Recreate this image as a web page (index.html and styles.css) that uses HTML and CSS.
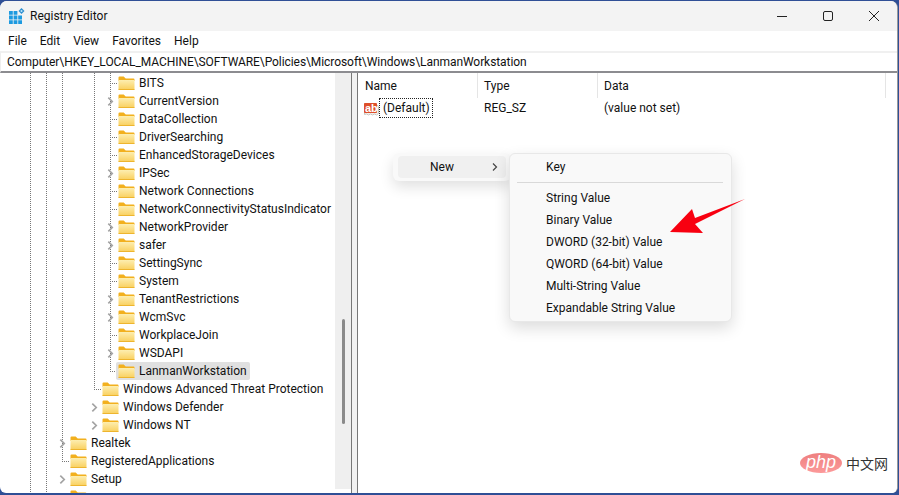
FILE: index.html
```html
<!DOCTYPE html>
<html lang="en">
<head>
<meta charset="utf-8">
<title>Registry Editor</title>
<link rel="stylesheet" href="styles.css">
</head>
<body>
<svg class="defs" width="0" height="0" aria-hidden="true">
  <defs>
    <linearGradient id="fb" x1="0" y1="0" x2="0" y2="1"><stop offset="0" stop-color="#fdeeb0"/><stop offset="1" stop-color="#f9cf5c"/></linearGradient>
    <symbol id="folder" viewBox="0 0 17 16">
      <path d="M0.5 2.5a1 1 0 0 1 1-1h4.2l2 2H15.5a1 1 0 0 1 1 1V6H0.5z" fill="#f2b01e"/>
      <path d="M0.5 5h16v9a1 1 0 0 1-1 1h-14a1 1 0 0 1-1-1z" fill="url(#fb)"/>
      <path d="M0.5 14.5h16" stroke="#eeb52e" stroke-width="1"/>
    </symbol>
    <symbol id="chev" viewBox="0 0 8 12"><path d="M1.5 1.5L6 6l-4.500 4.500" fill="none" stroke="#a3a3a3" stroke-width="1.900"/></symbol>
  </defs>
</svg>
<div class="window">
  <header class="titlebar">
    <svg class="appicon" width="16" height="16" viewBox="0 0 16 16">
      <path d="M0 3h3.800v3.800H0zM4.600 3h3.800v3.800H4.600zM0 7.600h3.800v3.800H0zM4.600 7.600h3.800v3.800H4.600zM9.200 7.600H13v3.800H9.200zM0 12.200h3.800V16H0zM4.600 12.200h3.800V16H4.600zM9.200 12.200H13V16H9.200z" fill="#1d9ae0"/>
      <path d="M12.500 0l3 3-3 3-3-3z" fill="#2f8fd0"/><circle cx="12.500" cy="3" r="1" fill="#bfe6fb"/>
    </svg>
    <span class="apptitle">Registry Editor</span>
    <div class="controls">
      <svg class="ctl" width="46" height="22" viewBox="0 0 46 22"><path d="M18 11.500h10" stroke="#222" stroke-width="1"/></svg>
      <svg class="ctl" width="46" height="22" viewBox="0 0 46 22"><rect x="18.500" y="6.500" width="9" height="9" rx="1.500" fill="none" stroke="#222" stroke-width="1"/></svg>
      <svg class="ctl" width="46" height="22" viewBox="0 0 46 22"><path d="M18 6l10 10M28 6L18 16" stroke="#222" stroke-width="1"/></svg>
    </div>
  </header>
  <nav class="menubar">
    <span class="menuitem">File</span><span class="menuitem">Edit</span><span class="menuitem">View</span><span class="menuitem">Favorites</span><span class="menuitem">Help</span>
  </nav>
  <div class="address">Computer\HKEY_LOCAL_MACHINE\SOFTWARE\Policies\Microsoft\Windows\LanmanWorkstation</div>
  <main class="panes">
    <section class="tree">
      <i class="guide g30"></i><i class="guide g46"></i><i class="guide g62"></i><i class="guide g94"></i><i class="guide g110"></i>
      <i class="thumb"></i>
      <div class="row a leaf"><span class="twisty"></span><svg class="fld"><use href="#folder"/></svg><span class="label">BITS</span></div>
      <div class="row a"><span class="twisty"><svg class="chv"><use href="#chev"/></svg></span><svg class="fld"><use href="#folder"/></svg><span class="label">CurrentVersion</span></div>
      <div class="row a leaf"><span class="twisty"></span><svg class="fld"><use href="#folder"/></svg><span class="label">DataCollection</span></div>
      <div class="row a leaf"><span class="twisty"></span><svg class="fld"><use href="#folder"/></svg><span class="label">DriverSearching</span></div>
      <div class="row a leaf"><span class="twisty"></span><svg class="fld"><use href="#folder"/></svg><span class="label">EnhancedStorageDevices</span></div>
      <div class="row a"><span class="twisty"><svg class="chv"><use href="#chev"/></svg></span><svg class="fld"><use href="#folder"/></svg><span class="label">IPSec</span></div>
      <div class="row a leaf"><span class="twisty"></span><svg class="fld"><use href="#folder"/></svg><span class="label">Network Connections</span></div>
      <div class="row a leaf"><span class="twisty"></span><svg class="fld"><use href="#folder"/></svg><span class="label">NetworkConnectivityStatusIndicator</span></div>
      <div class="row a"><span class="twisty"><svg class="chv"><use href="#chev"/></svg></span><svg class="fld"><use href="#folder"/></svg><span class="label">NetworkProvider</span></div>
      <div class="row a"><span class="twisty"><svg class="chv"><use href="#chev"/></svg></span><svg class="fld"><use href="#folder"/></svg><span class="label">safer</span></div>
      <div class="row a leaf"><span class="twisty"></span><svg class="fld"><use href="#folder"/></svg><span class="label">SettingSync</span></div>
      <div class="row a leaf"><span class="twisty"></span><svg class="fld"><use href="#folder"/></svg><span class="label">System</span></div>
      <div class="row a"><span class="twisty"><svg class="chv"><use href="#chev"/></svg></span><svg class="fld"><use href="#folder"/></svg><span class="label">TenantRestrictions</span></div>
      <div class="row a"><span class="twisty"><svg class="chv"><use href="#chev"/></svg></span><svg class="fld"><use href="#folder"/></svg><span class="label">WcmSvc</span></div>
      <div class="row a leaf"><span class="twisty"></span><svg class="fld"><use href="#folder"/></svg><span class="label">WorkplaceJoin</span></div>
      <div class="row a"><span class="twisty"><svg class="chv"><use href="#chev"/></svg></span><svg class="fld"><use href="#folder"/></svg><span class="label">WSDAPI</span></div>
      <div class="row a leaf selected"><span class="twisty"></span><svg class="fld"><use href="#folder"/></svg><span class="label">LanmanWorkstation</span></div>
      <div class="row b leaf"><span class="twisty"></span><svg class="fld"><use href="#folder"/></svg><span class="label">Windows Advanced Threat Protection</span></div>
      <div class="row b"><span class="twisty"><svg class="chv"><use href="#chev"/></svg></span><svg class="fld"><use href="#folder"/></svg><span class="label">Windows Defender</span></div>
      <div class="row b"><span class="twisty"><svg class="chv"><use href="#chev"/></svg></span><svg class="fld"><use href="#folder"/></svg><span class="label">Windows NT</span></div>
      <div class="row c"><span class="twisty"><svg class="chv"><use href="#chev"/></svg></span><svg class="fld"><use href="#folder"/></svg><span class="label">Realtek</span></div>
      <div class="row c leaf"><span class="twisty"></span><svg class="fld"><use href="#folder"/></svg><span class="label">RegisteredApplications</span></div>
      <div class="row c"><span class="twisty"><svg class="chv"><use href="#chev"/></svg></span><svg class="fld"><use href="#folder"/></svg><span class="label">Setup</span></div>
      <div class="row c"><span class="twisty"></span><svg class="fld"><use href="#folder"/></svg><span class="label"></span></div>
    </section>
    <div class="splitter"></div>
    <section class="values">
      <div class="vhead">
        <span class="vh vname">Name</span><span class="vh vtype">Type</span><span class="vh vdata">Data</span>
      </div>
      <div class="vrow">
        <span class="vcellname">
          <svg class="abicon" width="16" height="16" viewBox="0 0 16 16">
            <path d="M1.500 3.500h11l3 3v7l-2 1.500-2-1-2 1-2-1-2 1-2-1-2 .500z" fill="#f4f1ee" stroke="#c9c5c1"/>
            <rect x="1" y="3" width="13" height="10" rx="1" fill="#de4f2a"/>
          </svg>
          <span class="abtext">ab</span>
          <span class="focus">(Default)</span>
        </span>
        <span class="vtypecell">REG_SZ</span>
        <span class="vdatacell">(value not set)</span>
      </div>
    </section>
  </main>
</div>

<div class="ctx">
  <div class="ctxitem"><span>New</span><svg width="8" height="12" viewBox="0 0 8 12"><path d="M2 2.500L5.500 6 2 9.500" fill="none" stroke="#444" stroke-width="1.200"/></svg></div>
</div>
<div class="submenu">
  <div class="subitem">Key</div>
  <div class="subsep"></div>
  <div class="subitem">String Value</div>
  <div class="subitem">Binary Value</div>
  <div class="subitem">DWORD (32-bit) Value</div>
  <div class="subitem">QWORD (64-bit) Value</div>
  <div class="subitem">Multi-String Value</div>
  <div class="subitem">Expandable String Value</div>
</div>
<svg class="arrow" width="80" height="40" viewBox="668 197 80 40"><path d="M670 232L692 209L695 218L745 199L695 224L703 233z" fill="#f80010"/></svg>
<div class="wm"><span class="wmlogo">php</span><span class="wmcn">中文网</span></div>
</body>
</html>
```
FILE: styles.css
```css
* { box-sizing: border-box; }
html, body { margin: 0; padding: 0; }
body {
  width: 899px; height: 495px; overflow: hidden; position: relative;
  background: #2f4f96;
  font-family: Roboto, "Noto Sans", sans-serif;
  font-size: 12px; color: #111;
}
.defs { position: absolute; }
.window {
  margin: 1px 1px 0 0; height: 492px; background: #fff;
  border-radius: 7px 7px 6px 6px; overflow: hidden;
  display: flex; flex-direction: column;
  border-right: 1px solid #9a9a9a;
}
.titlebar { height: 30px; background: #f3f3f3; display: flex; align-items: center; padding-left: 9px; flex: none; }
.appicon { flex: none; }
.apptitle { margin-left: 5px; }
.controls { margin-left: auto; display: flex; }
.ctl { display: block; }
.menubar { height: 20px; flex: none; display: flex; align-items: center; padding-left: 8px; background: #fff; gap: 13px; }
.address { flex: none; background: #fff; border-top: 2px solid #f0f0f0; border-left: 1px solid #eee; padding-left: 6px; line-height: 19px; letter-spacing: -0.07px; white-space: nowrap; border-bottom: 2px solid #8c8c90; box-sizing: content-box; height: 18px; }
.panes { flex: 1; display: flex; min-height: 0; }
.tree { width: 352px; flex: none; position: relative; overflow: hidden; padding-top: 1px; border-right: 1px solid #777; background: linear-gradient(#efefef, #efefef) no-repeat 335px 0 / 16px calc(100% - 4px); }
.guide { position: absolute; width: 1px; top: 0; background: repeating-linear-gradient(#777 0 1px, transparent 1px 2px); }
.g30 { left: 30px; height: 100%; }
.g46 { left: 46px; height: 100%; }
.g62 { left: 62px; height: 388px; }
.g94 { left: 94px; height: 317px; }
.g110 { left: 110px; height: 297px; }
.thumb { position: absolute; left: 342px; top: 246px; width: 3px; height: 105px; background: #8a8a8a; border-radius: 2px; }
.row { height: 18px; display: flex; align-items: center; position: relative; white-space: nowrap; }
.row.a { padding-left: 102px; }
.row.b { padding-left: 86px; }
.row.c { padding-left: 54px; }
.twisty { width: 16px; height: 18px; flex: none; display: flex; align-items: center; justify-content: center; }
.chv { width: 7px; height: 11px; }
.leaf .twisty { background: repeating-linear-gradient(90deg, #777 0 1px, transparent 1px 2px) no-repeat 8px 9px / 7px 1px; }
.fld { width: 17px; height: 16px; flex: none; }
.label { margin-left: 4px; }
.selected::after { content: ""; position: absolute; left: 116px; top: 0; width: 134px; height: 18px; background: #e0e0e0; border-radius: 2px; z-index: 0; }
.selected .fld, .selected .label { position: relative; z-index: 1; }
.splitter { width: 5px; flex: none; background: #f1f1f1; }
.values { flex: 1; border-left: 1px solid #777; background: #fff; }
.vhead { height: 25px; display: flex; align-items: center; }
.vh { height: 25px; line-height: 26px; border-right: 1px solid #e5e5e5; padding-left: 7px; }
.vname { width: 120px; }
.vtype { width: 120px; padding-left: 6px; }
.vdata { width: 288px; padding-left: 6px; }
.vrow { height: 20px; display: flex; align-items: center; position: relative; }
.vcellname { width: 120px; height: 20px; display: flex; align-items: center; padding-left: 5px; position: relative; }
.abicon { flex: none; }
.abtext { position: absolute; left: 7px; top: 4px; color: #fff; font: bold 11px/12px "Liberation Sans", sans-serif; }
.focus { border: 1px dotted #222; height: 20px; line-height: 18px; padding: 0 2px 0 3px; }
.vtypecell { width: 120px; padding-left: 6px; }
.vdatacell { padding-left: 6px; }
.ctx { position: absolute; left: 393px; top: 153px; width: 118px; height: 28px; background: #f9f9f9; border-radius: 6px; padding: 3px 5px; box-shadow: 0 6px 14px rgba(0,0,0,.12); }
.ctxitem { height: 22px; background: #f0f0f0; border-radius: 4px; display: flex; align-items: center; padding-left: 32px; width: 108px; }
.ctxitem svg { margin-left: auto; margin-right: 7px; }
.submenu { position: absolute; left: 509px; top: 153px; width: 223px; height: 169px; background: #f9f9f9; border: 1px solid #e8e8e8; border-radius: 6px; padding-top: 2px; box-shadow: 0 6px 16px rgba(0,0,0,.14); }
.subitem { height: 22px; line-height: 22px; padding-left: 36px; }
.subsep { height: 1px; background: #d9d9d9; margin: 4px 8px 4px 7px; }
.arrow { position: absolute; left: 668px; top: 197px; }
.wm { position: absolute; left: 800px; top: 453px; display: flex; align-items: center; }
.wmlogo { width: 42px; height: 20px; border-radius: 50%; background: linear-gradient(#ee7f7f, #fc9a9a); color: #fff; font: italic 18px/19px "Liberation Sans", sans-serif; text-align: center; }
.wmcn { margin-left: 4px; font: 14px/20px "Noto Sans CJK SC", sans-serif; color: #333; }
```
